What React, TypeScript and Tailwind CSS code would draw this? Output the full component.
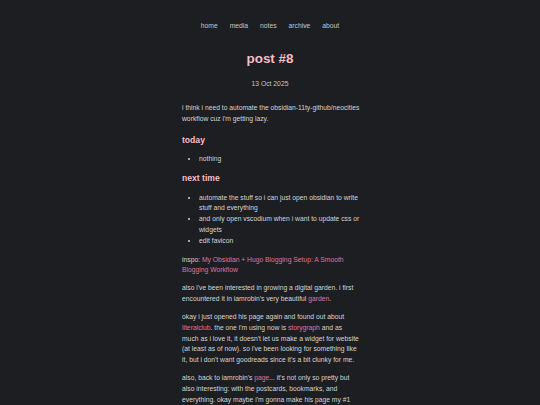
const NAV = ["home", "media", "notes", "archive", "about"];

function A({ children }: { children: React.ReactNode }) {
  return <a className="text-[#e0719f] no-underline">{children}</a>;
}

export default function App() {
  return (
    <div className="min-h-[405px] bg-[#1d1e21] text-[#d4d4d6] font-['Liberation_Sans',Arial,sans-serif] text-[6.75px] leading-[10.9px]">
      {/* nav */}
      <nav className="flex justify-center gap-[12px] pt-[20.5px] text-[#c4c6cc]">
        {NAV.map((n) => (
          <a key={n}>{n}</a>
        ))}
      </nav>

      {/* header */}
      <header className="text-center">
        <h1 className="mt-[19.5px] text-[13.4px] leading-[16px] font-bold text-[#f6bcc8]">post #8</h1>
        <p className="mt-[12.5px] text-[#c8c8c8]">13 Oct 2025</p>
      </header>

      {/* body */}
      <main className="mx-auto w-[178px] mt-[12.5px] translate-x-[1px]">
        <p>i think i need to automate the obsidian-11ty-github/neocities workflow cuz i'm getting lazy.</p>

        <h2 className="mt-[10px] text-[8.6px] leading-[11px] font-bold text-[#f6bcc8]">today</h2>
        <ul className="mt-[8.5px] list-disc pl-[17px]">
          <li>nothing</li>
        </ul>

        <h2 className="mt-[8px] text-[8.6px] leading-[11px] font-bold text-[#f6bcc8]">next time</h2>
        <ul className="mt-[8.5px] list-disc pl-[17px]">
          <li>automate the stuff so i can just open obsidian to write stuff and everything</li>
          <li>and only open vscodium when i want to update css or widgets</li>
          <li>edit favicon</li>
        </ul>

        <p className="mt-[7.5px]">
          inspo: <A>My Obsidian + Hugo Blogging Setup: A Smooth Blogging Workflow</A>
        </p>
        <p className="mt-[6.75px]">
          also i've been interested in growing a digital garden. i first encountered it in iamrobin's very beautiful <A>garden</A>.
        </p>
        <p className="mt-[6.75px]">
          okay i just opened his page again and found out about <A>literalclub</A>. the one i'm using now is <A>storygraph</A> and as much as i love it, it doesn't let us make a widget for website (at least as of now). so i've been looking for something like it, but i don't want goodreads since it's a bit clunky for me.
        </p>
        <p className="mt-[6.75px]">
          also, back to iamrobin's <A>page</A>... it's not only so pretty but also interesting: with the postcards, bookmarks, and everything. okay maybe i'm gonna make his page my #1 source of inspo lol.
        </p>
      </main>
    </div>
  );
}
